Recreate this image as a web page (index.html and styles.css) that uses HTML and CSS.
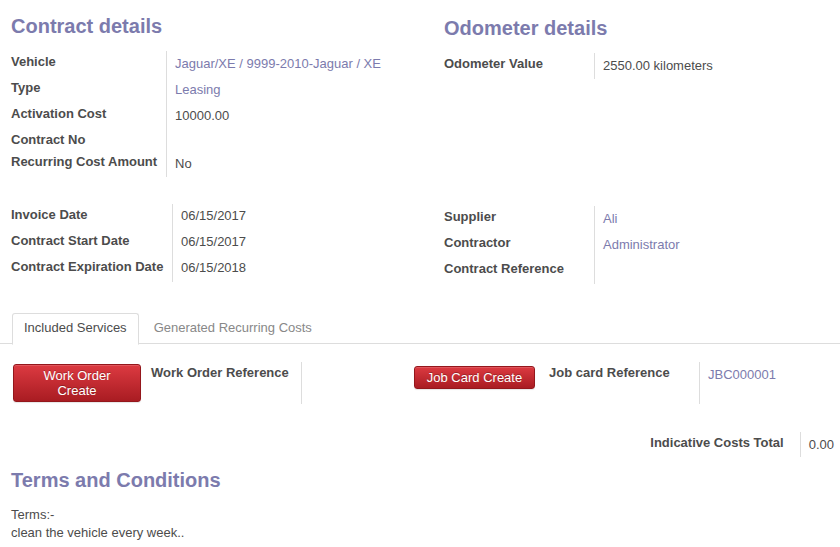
FILE: index.html
```html
<!DOCTYPE html>
<html>
<head>
<meta charset="utf-8">
<link rel="stylesheet" href="styles.css">
</head>
<body>
<div class="sheet">
  <div class="cols">
    <div class="col">
      <h2 class="title">Contract details</h2>
      <div class="group g1">
        <div class="lbl">Vehicle</div><div class="val link">Jaguar/XE / 9999-2010-Jaguar / XE</div>
        <div class="lbl">Type</div><div class="val link">Leasing</div>
        <div class="lbl">Activation Cost</div><div class="val">10000.00</div>
        <div class="lbl">Contract No</div><div class="val"></div>
        <div class="lbl">Recurring Cost Amount</div><div class="val">No</div>
      </div>
    </div>
    <div class="col right">
      <h2 class="title">Odometer details</h2>
      <div class="group g-r">
        <div class="lbl">Odometer Value</div><div class="val">2550.00 kilometers</div>
      </div>
    </div>
  </div>

  <div class="cols second">
    <div class="col">
      <div class="group g2">
        <div class="lbl">Invoice Date</div><div class="val v3">06/15/2017</div>
        <div class="lbl">Contract Start Date</div><div class="val v3">06/15/2017</div>
        <div class="lbl">Contract Expiration Date</div><div class="val v3">06/15/2018</div>
      </div>
    </div>
    <div class="col right">
      <div class="group g-r g-r2">
        <div class="lbl">Supplier</div><div class="val link">Ali</div>
        <div class="lbl">Contractor</div><div class="val link">Administrator</div>
        <div class="lbl">Contract Reference</div><div class="val"></div>
      </div>
    </div>
  </div>
</div>

<div class="tabs">
  <div class="tab active">Included Services</div>
  <div class="tab">Generated Recurring Costs</div>
</div>

<div class="actions">
  <div class="btn-cell"><button class="btn btn-tall">Work Order<br>Create</button></div>
  <div class="a-lbl wo-lbl">Work Order Reference</div>
  <div class="a-val wo-val"></div>
  <div class="btn-cell"><button class="btn btn-short">Job Card Create</button></div>
  <div class="a-lbl jc-lbl">Job card Reference</div>
  <div class="a-val jc-val link">JBC000001</div>
</div>

<div class="total">
  <div class="t-lbl">Indicative Costs Total</div>
  <div class="t-val">0.00</div>
</div>

<div class="terms">
  <h2 class="title">Terms and Conditions</h2>
  <div class="terms-text">Terms:-<br>clean the vehicle every week..</div>
</div>
</body>
</html>
```

FILE: styles.css
```css
html, body {
  margin: 0;
  padding: 0;
  background: #ffffff;
}
body {
  font-family: "Liberation Sans", Arial, sans-serif;
  font-size: 13px;
  line-height: 18px;
  color: #4c4c4c;
  width: 840px;
  overflow: hidden;
}
.sheet {
  padding: 15px 0 0 11px;
}
.cols {
  display: grid;
  grid-template-columns: 433px 1fr;
}
.right {
  padding-top: 2px;
}
.title {
  margin: 0;
  font-size: 20px;
  line-height: 22px;
  font-weight: bold;
  color: #7c7bad;
}
.group {
  display: grid;
  margin-top: 14px;
}
.g1 {
  grid-template-columns: 155px 1fr;
  grid-template-rows: 26px 26px 26px 22px 26px;
}
.g-r {
  grid-template-columns: 150px 1fr;
  grid-auto-rows: 26px;
}
.second {
  margin-top: 27px;
}
.g2 {
  margin-top: 0;
  grid-template-columns: 161px 1fr;
  grid-auto-rows: 26px;
}
.g-r2 {
  margin-top: 0;
  padding-top: 0;
}
.lbl {
  font-weight: bold;
  color: #4c4c4c;
  padding-top: 2px;
  white-space: nowrap;
}
.val {
  border-left: 1px solid #dddddd;
  padding: 4px 0 0 8px;
  color: #4c4c4c;
}
.val.v3 {
  padding-top: 3px;
}
.g-r2 .val {
  padding-top: 4px;
}
.link {
  color: #7c7bad;
}

.tabs {
  display: flex;
  margin-top: 29px;
  padding-left: 12px;
  border-bottom: 1px solid #dddddd;
  height: 30px;
}
.tab {
  padding: 5px 11px 7px;
  border: 1px solid transparent;
  border-radius: 3px 3px 0 0;
  color: #888888;
  height: 18px;
}
.tab.active {
  border-color: #dddddd;
  border-bottom-color: #ffffff;
  color: #4c4c4c;
  background: #ffffff;
}
.tab + .tab {
  margin-left: 2px;
  padding-left: 12px;
}

.actions {
  display: flex;
  margin-top: 18px;
  padding-left: 13px;
  height: 42px;
}
.btn {
  font-family: "Liberation Sans", Arial, sans-serif;
  font-size: 13px;
  line-height: 15px;
  color: #ffffff;
  text-shadow: 0 -1px 0 rgba(0, 0, 0, 0.25);
  background: linear-gradient(to bottom, #dc3a41 0%, #a91c22 100%);
  border: 1px solid #94171c;
  border-radius: 3px;
  box-shadow: inset 0 1px 0 rgba(255, 255, 255, 0.15), 0 1px 1px rgba(0, 0, 0, 0.1);
  padding: 0;
  display: block;
}
.btn-tall {
  width: 128px;
  height: 38px;
  margin-top: 2px;
}
.btn-short {
  width: 121px;
  height: 23px;
  margin-top: 4px;
}
.a-lbl {
  font-weight: bold;
  width: 150px;
  padding-top: 2px;
  white-space: nowrap;
}
.wo-lbl {
  margin-left: 10px;
}
.jc-lbl {
  margin-left: 14px;
}
.a-val {
  border-left: 1px solid #dddddd;
}
.wo-val {
  width: 112px;
}
.jc-val {
  padding: 4px 0 0 8px;
}

.total {
  display: flex;
  justify-content: flex-end;
  margin-top: 28px;
  height: 25px;
}
.t-lbl {
  font-weight: bold;
  padding: 2px 16px 0 0;
}
.t-val {
  border-left: 1px solid #dddddd;
  padding: 4px 6px 0 8px;
}

.terms {
  padding-left: 11px;
  margin-top: 12px;
}
.terms-text {
  margin-top: 15px;
}
```
